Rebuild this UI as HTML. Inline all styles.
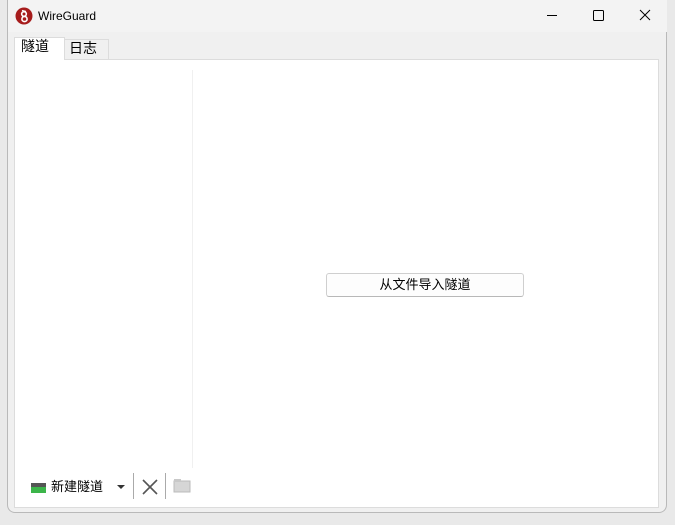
<!DOCTYPE html>
<html><head><meta charset="utf-8"><style>
body{margin:0;width:675px;height:525px;background:#e9e9e9;position:relative;overflow:hidden;font-family:"Liberation Sans","Noto Sans CJK SC",sans-serif;}
.win{position:absolute;left:7px;top:0;width:660px;height:513px;background:#f0f0f0;border:1px solid #b9b9b9;border-top:none;border-radius:0 0 8px 8px;box-sizing:border-box;}
.title{position:absolute;left:0;top:0;width:659px;height:32px;background:#f3f3f3;}
.t{position:absolute;font-size:12px;color:#000;}
.panel{position:absolute;left:14px;top:59px;width:645px;height:449px;background:#fff;border:1px solid #dcdcdc;box-sizing:border-box;}
.tab{position:absolute;font-size:14px;line-height:16px;box-sizing:border-box;border:1px solid #dcdcdc;border-bottom:none;}
.btn{position:absolute;left:326px;top:273px;width:198px;height:24px;border:1px solid #cfcfcf;border-radius:3px;background:#fdfdfd;box-sizing:border-box;font-size:13px;text-align:center;line-height:21px;border-bottom-color:#b8b8b8;}
</style></head><body>
<div class="win"><div class="title"></div></div>
<svg style="position:absolute;left:15px;top:7px" width="18" height="18" viewBox="0 0 18 18"><circle cx="9" cy="9" r="8.5" fill="#a61c1c"/><circle cx="9" cy="7" r="2.3" fill="none" stroke="#fff" stroke-width="1.6"/><circle cx="9.5" cy="12" r="2.6" fill="none" stroke="#fff" stroke-width="1.6"/><path d="M7 3.5 L11 4.5" stroke="#fff" stroke-width="1.3"/></svg>
<div class="t" style="left:38px;top:9px">WireGuard</div>
<svg style="position:absolute;left:540px;top:8px" width="120" height="16"><path d="M7 7.5h10" stroke="#000"/><rect x="53.5" y="2.5" width="10" height="10" rx="1" fill="none" stroke="#000"/><path d="M100 2l10 10M110 2l-10 10" stroke="#000"/></svg>
<div class="tab" style="left:64px;top:39px;width:45px;height:20px;background:#f0f0f0;padding:0 0 0 4px">日志</div>
<div class="panel">
<div style="position:absolute;left:177px;top:10px;width:1px;height:398px;background:#f0f0f0"></div>
</div>
<div class="tab" style="left:14px;top:37px;width:51px;height:23px;background:#fff;padding:0 0 0 6px;z-index:2">隧道</div>
<div class="btn">从文件导入隧道</div>
<svg style="position:absolute;left:31px;top:482px" width="16" height="12"><rect x="0" y="1" width="15" height="4" fill="#555"/><rect x="0" y="5" width="15" height="6" fill="#3cb54a"/></svg>
<div class="t" style="left:51px;top:476px;font-size:13px">新建隧道</div>
<svg style="position:absolute;left:116px;top:472px" width="80" height="28"><path d="M1 13h8l-4 4z" fill="#333"/><path d="M17.5 1v26" stroke="#aaa"/><path d="M27 8l14 14M41 8l-14 14" stroke="#555" stroke-width="1.6"/><path d="M49.5 1v26" stroke="#aaa"/><rect x="58" y="9" width="16" height="11" fill="#d6d6d6" stroke="#bbb"/><rect x="58" y="7" width="7" height="3" fill="#c8c8c8"/></svg>
</body></html>
